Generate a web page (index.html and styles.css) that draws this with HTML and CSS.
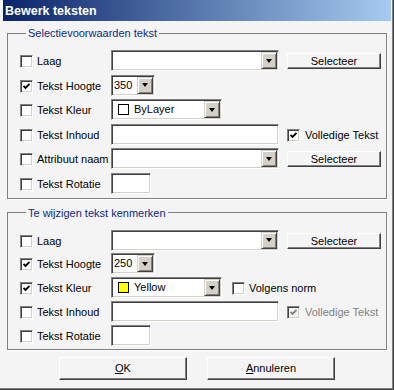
FILE: index.html
```html
<!DOCTYPE html>
<html>
<head>
  <link rel="stylesheet" href="styles.css">
</head>
<body>
  <div class="window">
    <div class="titlebar">Bewerk teksten</div>
    <div class="content">

      <fieldset class="group select">
        <legend>Selectievoorwaarden tekst</legend>
        <div class="row">
          <label class="check"><span class="box"></span><span>Laag</span></label>
          <div class="field combo w-long"><span class="value"></span><span class="drop"><i></i></span></div>
          <button class="btn small">Selecteer</button>
        </div>
        <div class="row">
          <label class="check"><span class="box checked"><svg width="7" height="7" viewBox="0 0 7 7"><polyline points="0.5,3 2.5,5 6.5,1" /></svg></span><span>Tekst Hoogte</span></label>
          <div class="field combo w-short"><span class="value">350</span><span class="drop"><i></i></span></div>
        </div>
        <div class="row">
          <label class="check"><span class="box"></span><span>Tekst Kleur</span></label>
          <div class="field combo w-mid"><span class="swatch"></span><span class="value">ByLayer</span><span class="drop"><i></i></span></div>
        </div>
        <div class="row">
          <label class="check"><span class="box"></span><span>Tekst Inhoud</span></label>
          <div class="field w-long"></div>
          <label class="check extra"><span class="box checked"><svg width="7" height="7" viewBox="0 0 7 7"><polyline points="0.5,3 2.5,5 6.5,1" /></svg></span><span>Volledige Tekst</span></label>
        </div>
        <div class="row">
          <label class="check"><span class="box"></span><span>Attribuut naam</span></label>
          <div class="field combo w-long"><span class="value"></span><span class="drop"><i></i></span></div>
          <button class="btn small">Selecteer</button>
        </div>
        <div class="row">
          <label class="check"><span class="box"></span><span>Tekst Rotatie</span></label>
          <div class="field w-tiny"></div>
        </div>
      </fieldset>

      <fieldset class="group change">
        <legend>Te wijzigen tekst kenmerken</legend>
        <div class="row">
          <label class="check"><span class="box"></span><span>Laag</span></label>
          <div class="field combo w-long"><span class="value"></span><span class="drop"><i></i></span></div>
          <button class="btn small">Selecteer</button>
        </div>
        <div class="row">
          <label class="check"><span class="box checked"><svg width="7" height="7" viewBox="0 0 7 7"><polyline points="0.5,3 2.5,5 6.5,1" /></svg></span><span>Tekst Hoogte</span></label>
          <div class="field combo w-short"><span class="value">250</span><span class="drop"><i></i></span></div>
        </div>
        <div class="row">
          <label class="check"><span class="box checked"><svg width="7" height="7" viewBox="0 0 7 7"><polyline points="0.5,3 2.5,5 6.5,1" /></svg></span><span>Tekst Kleur</span></label>
          <div class="field combo w-mid"><span class="swatch yellow"></span><span class="value">Yellow</span><span class="drop"><i></i></span></div>
          <label class="check norm"><span class="box"></span><span>Volgens norm</span></label>
        </div>
        <div class="row">
          <label class="check"><span class="box"></span><span>Tekst Inhoud</span></label>
          <div class="field w-long"></div>
          <label class="check extra disabled"><span class="box checked"><svg width="7" height="7" viewBox="0 0 7 7"><polyline points="0.5,3 2.5,5 6.5,1" /></svg></span><span>Volledige Tekst</span></label>
        </div>
        <div class="row">
          <label class="check"><span class="box"></span><span>Tekst Rotatie</span></label>
          <div class="field w-tiny"></div>
        </div>
      </fieldset>

      <div class="actions">
        <button class="btn large"><u>O</u>K</button>
        <button class="btn large"><u>A</u>nnuleren</button>
      </div>
    </div>
  </div>
</body>
</html>
```

FILE: styles.css
```css
* { box-sizing: border-box; }
html, body { margin: 0; }
body {
  font: 11px/13px "Liberation Sans", Arial, sans-serif;
  color: #000;
  background: #f4f4f4;
}

.window {
  width: 394px;
  height: 390px;
  padding: 0 3px 3px 3px;
  background: #f4f4f4;
  box-shadow: inset -1px -1px 0 #404040, inset -2px -2px 0 #808080;
}
.titlebar {
  height: 21px;
  padding: 3px 0 0 2px;
  line-height: 17px;
  font-size: 12.5px;
  font-weight: bold;
  color: #fff;
  background: linear-gradient(to right, #0a246a, #a6caf0);
}
.content { padding: 5px 4px 0; }

/* group boxes */
.group {
  margin: 0;
  padding: 10px 0 0 12px;
  min-width: 0;
  border: 1px solid #808080;
  box-shadow: 1px 1px 0 #fff;
}
.group legend {
  margin-left: 6px;
  padding: 0 2px;
  line-height: 14px;
  color: #0c2a7c;
}
.group + .group { margin-top: 7px; }

.row { display: flex; align-items: flex-start; height: 24.6px; }
.change .row { height: 23.8px; }
.change .row:first-child { margin-top: 1px; }

/* checkbox + label */
.check { display: flex; align-items: center; gap: 4px; width: 91px; margin-top: 5px; white-space: nowrap; }
.check.extra { width: auto; margin-left: 8px; gap: 5px; }
.check.norm { width: auto; margin-left: 10px; }
.box {
  width: 13px;
  height: 13px;
  flex: none;
  display: flex;
  align-items: center;
  justify-content: center;
  background: #fff;
  border: 1px solid;
  border-color: #808080 #fff #fff #808080;
  box-shadow: inset 1px 1px 0 #404040, inset -1px -1px 0 #d4d0c8;
}
.box svg { display: block; }
.box polyline { fill: none; stroke: #000; stroke-width: 1.8; }
.disabled { color: #808080; }
.disabled .box { background: #f4f4f4; }
.disabled .box polyline { stroke: #808080; }

/* text fields and combos */
.field {
  height: 21px;
  flex: none;
  display: flex;
  align-items: center;
  padding: 1px;
  background: #fff;
  border: 1px solid;
  border-color: #808080 #fff #fff #808080;
  box-shadow: inset 1px 1px 0 #404040, inset -1px -1px 0 #d4d0c8;
}
.w-long { width: 168px; }
.w-mid { width: 111px; }
.w-short { width: 44px; }
.w-tiny { width: 40px; }
.combo .value { flex: 1; padding-left: 1px; line-height: 17px; }
.swatch {
  width: 11px;
  height: 11px;
  margin: 0 4px 0 5px;
  border: 1px solid #000;
  background: #fff;
}
.swatch.yellow { background: #ffff00; }
.drop {
  width: 16px;
  height: 17px;
  display: flex;
  align-items: center;
  justify-content: center;
  background: #d4d0c8;
  border: 1px solid;
  border-color: #d4d0c8 #404040 #404040 #d4d0c8;
  box-shadow: inset 1px 1px 0 #fff, inset -1px -1px 0 #808080;
}
.drop i {
  width: 0;
  height: 0;
  border-top: 4px solid #000;
  border-left: 3.5px solid transparent;
  border-right: 3.5px solid transparent;
}

/* buttons */
.btn {
  font: inherit;
  color: #000;
  padding: 0;
  background: #f4f4f4;
  border: 1px solid;
  border-color: #fff #404040 #404040 #fff;
  box-shadow: inset -1px -1px 0 #808080;
}
.btn.small { width: 94px; height: 16px; margin: 3px 0 0 8px; line-height: 12px; }
.btn.large { width: 128px; height: 23px; }

.actions { display: flex; justify-content: center; gap: 20px; margin-top: 7px; }
```
